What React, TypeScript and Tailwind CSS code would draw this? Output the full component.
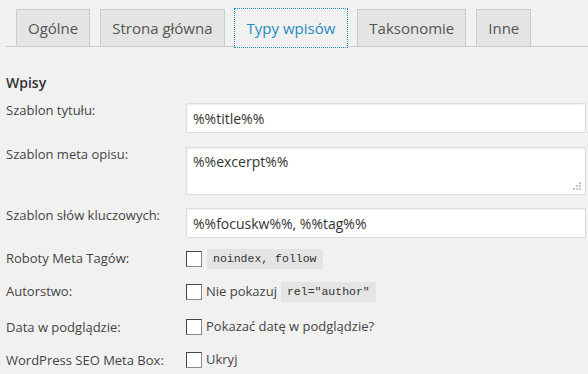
const tabs = ["Ogólne", "Strona główna", "Typy wpisów", "Taksonomie", "Inne"];

function Checkbox() {
  return (
    <span className="box-border inline-block h-[16px] w-[16px] shrink-0 border border-t-[#444] border-l-[#444] border-r-[#888] border-b-[#888] bg-white" />
  );
}

function Code({ children }: { children: React.ReactNode }) {
  return (
    <code className="bg-[#e4e4e4] px-[6px] py-[2px] font-['Liberation_Mono',monospace] text-[11.5px] leading-[16px] text-[#333]">
      {children}
    </code>
  );
}

function Label({ children }: { children: React.ReactNode }) {
  return <div className="w-[180px] shrink-0 text-[13px] leading-[15px]">{children}</div>;
}

export default function App() {
  return (
    <div className="h-[374px] w-[588px] overflow-hidden bg-[#f1f1f1] font-['Open_Sans',sans-serif] text-[#444]">
      <div className="ml-[6px] flex h-[47px] items-end gap-[10px] border-b border-[#ccc] pl-[10px]">
        {tabs.map((t) =>
          t === "Typy wpisów" ? (
            <div
              key={t}
              className="-mb-px flex h-[38px] items-center border border-b-0 border-transparent bg-[#f1f1f1] px-[11px] text-[15px] text-[#1e8cbe] outline-1 outline-offset-0 outline-dotted outline-[#1e8cbe]"
            >
              {t}
            </div>
          ) : (
            <div
              key={t}
              className="-mb-px flex h-[38px] items-center border border-[#ccc] bg-[#e4e4e4] px-[11px] text-[15px] text-[#555]"
            >
              {t}
            </div>
          )
        )}
      </div>

      <div className="pl-[6px] pr-[2px]">
        <div className="mt-[28px] text-[14px] font-semibold leading-[16px] text-[#333]">Wpisy</div>

        <div className="mt-[12px] flex items-start">
          <Label>Szablon tytułu:</Label>
          <div className="flex h-[30px] flex-1 items-center border border-[#ddd] bg-white px-[6px] text-[14px] text-[#333] shadow-[inset_0_1px_2px_rgba(0,0,0,0.07)]">
            %%title%%
          </div>
        </div>

        <div className="mt-[14px] flex items-start">
          <Label>Szablon meta opisu:</Label>
          <div className="relative h-[48px] flex-1 border border-[#ddd] bg-white px-[6px] pt-[4px] text-[14px] leading-[20px] text-[#333] shadow-[inset_0_1px_2px_rgba(0,0,0,0.07)]">
            %%excerpt%%
            <svg className="absolute bottom-[3px] right-[3px]" width="10" height="10" viewBox="0 0 10 10">
              <g fill="#c4c4c4">
                <rect x="7" y="1" width="2" height="2" />
                <rect x="4" y="4" width="2" height="2" />
                <rect x="7" y="4" width="2" height="2" />
                <rect x="1" y="7" width="2" height="2" />
                <rect x="4" y="7" width="2" height="2" />
                <rect x="7" y="7" width="2" height="2" />
              </g>
            </svg>
          </div>
        </div>

        <div className="mt-[13px] flex items-start">
          <Label>Szablon słów kluczowych:</Label>
          <div className="flex h-[30px] flex-1 items-center border border-[#ddd] bg-white px-[6px] text-[14px] text-[#333] shadow-[inset_0_1px_2px_rgba(0,0,0,0.07)]">
            %%focuskw%%, %%tag%%
          </div>
        </div>

        <div className="mt-[10px] flex h-[21px] items-center">
          <Label>Roboty Meta Tagów:</Label>
          <div className="flex items-center gap-[5px]">
            <Checkbox />
            <Code>noindex, follow</Code>
          </div>
        </div>

        <div className="mt-[12px] flex h-[21px] items-center">
          <Label>Autorstwo:</Label>
          <div className="flex items-center gap-[4px] text-[13px]">
            <Checkbox />
            <span>Nie pokazuj</span>
            <Code>rel="author"</Code>
          </div>
        </div>

        <div className="mt-[15px] flex h-[20px] items-center">
          <Label>Data w podglądzie:</Label>
          <div className="flex items-center gap-[4px] text-[13px]">
            <Checkbox />
            <span>Pokazać datę w podglądzie?</span>
          </div>
        </div>

        <div className="mt-[13px] flex h-[20px] items-center">
          <Label>WordPress SEO Meta Box:</Label>
          <div className="flex items-center gap-[4px] text-[13px]">
            <Checkbox />
            <span>Ukryj</span>
          </div>
        </div>
      </div>
    </div>
  );
}
